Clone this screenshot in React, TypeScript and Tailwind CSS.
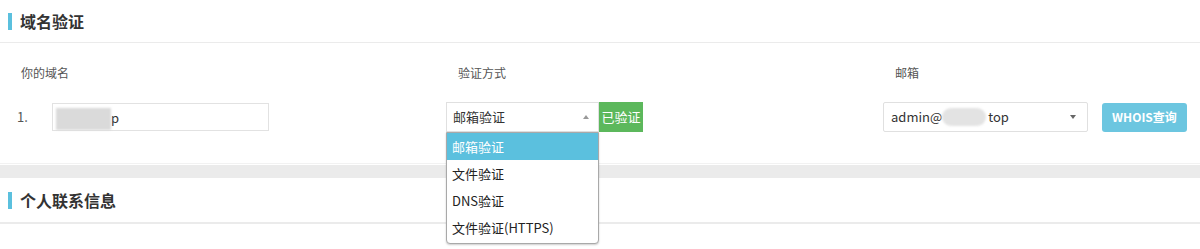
const font = "font-['Microsoft_YaHei','Noto_Sans_CJK_SC','Noto_Sans',sans-serif]";

const methods = ["邮箱验证", "文件验证", "DNS验证", "文件验证(HTTPS)"];

function SectionTitle({ title, className }: { title: string; className: string }) {
  return (
    <div className={`flex items-center pl-2 border-b border-[#ebebeb] ${className}`}>
      <span className="w-1 h-[17px] bg-[#5bc0de]" />
      <span className="ml-2 text-[16px] font-bold text-[#333]">{title}</span>
    </div>
  );
}

export default function App() {
  return (
    <div className={`w-[1200px] h-[249px] bg-white overflow-hidden ${font}`}>
      {/* Domain verification */}
      <SectionTitle title="域名验证" className="h-[43px]" />
      <div className="grid grid-cols-[437px_437px_1fr] pl-[9px] h-[120px] pt-[22px]">
        {/* Domain */}
        <div>
          <div className="pl-3 h-[15px] text-[12px] leading-[15px] text-[#555]">你的域名</div>
          <div className="mt-[23px] flex items-center">
            <span className="w-[43px] pl-2 text-[13px] text-[#555]">1.</span>
            <div className="relative w-[217px] h-[28px] border border-[#e2e2e2] flex items-center">
              <div className="ml-[3px] mt-[4px] w-[55px] h-[22px] bg-[#dadada] blur-[1px]" />
              <span className="text-[13px] text-[#333] leading-none">p</span>
            </div>
          </div>
        </div>

        {/* Method */}
        <div>
          <div className="pl-3 h-[15px] text-[12px] leading-[15px] text-[#555]">验证方式</div>
          <div className="mt-[22px] flex">
            <div className="relative">
              <div className="w-[153px] h-[30px] border border-[#e0e0e0] flex items-center justify-between pl-[6px] pr-[9px]">
                <span className="text-[13px] text-[#333]">邮箱验证</span>
                <span className="w-0 h-0 border-x-[3px] border-x-transparent border-b-[4px] border-b-[#999]" />
              </div>
              <div className="absolute left-0 top-[30px] w-[153px] bg-white border border-[#a9a9a9] rounded-b-[4px] shadow-[0_1px_2px_rgba(0,0,0,0.2)] pb-[2px] z-10">
                {methods.map((m, i) => (
                  <div
                    key={m}
                    className={`h-[27px] flex items-center pl-[5px] text-[13px] ${
                      i === 0 ? "bg-[#5bc0de] text-white" : "text-[#222]"
                    }`}
                  >
                    {m}
                  </div>
                ))}
              </div>
            </div>
            <div className="w-[44px] h-[30px] bg-[#5cb85c] text-white text-[13px] flex items-center justify-center">
              已验证
            </div>
          </div>
        </div>

        {/* Email */}
        <div>
          <div className="pl-3 h-[15px] text-[12px] leading-[15px] text-[#555]">邮箱</div>
          <div className="mt-[22px] flex items-center">
            <div className="w-[205px] h-[30px] border border-[#e0e0e0] rounded-[2px] flex items-center justify-between pl-[7px] pr-[11px]">
              <div className="flex items-center text-[13px] text-[#333]">
                <span>admin@</span>
                <span className="w-[44px] h-[18px] rounded-full bg-[#e3e3e3] blur-[1px]" />
                <span className="ml-[2px]">top</span>
              </div>
              <span className="w-0 h-0 border-x-[3px] border-x-transparent border-t-[4px] border-t-[#666]" />
            </div>
            <div className="ml-[14px] w-[85px] h-[29px] rounded-[3px] bg-[#6cc6e0] text-white text-[12px] font-bold flex items-center justify-center">
              WHOIS查询
            </div>
          </div>
        </div>
      </div>

      <div className="border-t border-[#f2f2f2] h-[2px]" />
      <div className="h-[13px] bg-[#ebebeb]" />

      {/* Contact */}
      <SectionTitle title="个人联系信息" className="h-[46px] border-b-2" />
    </div>
  );
}
